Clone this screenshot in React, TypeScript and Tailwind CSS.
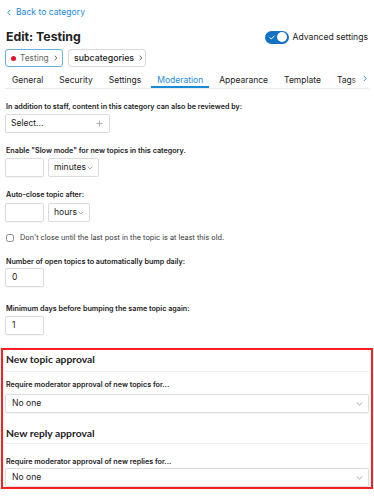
const TABS = ["General", "Security", "Settings", "Moderation", "Appearance", "Template", "Tags"];

function Chevron({ className = "" }: { className?: string }) {
  return (
    <svg viewBox="0 0 10 6" className={className} fill="none" stroke="currentColor" strokeWidth="1.2" strokeLinecap="round" strokeLinejoin="round">
      <path d="M1.5 1.2 5 4.6 8.5 1.2" />
    </svg>
  );
}

function Caret({ className = "" }: { className?: string }) {
  return (
    <svg viewBox="0 0 6 10" className={className} fill="none" stroke="currentColor" strokeWidth="1.4" strokeLinecap="round" strokeLinejoin="round">
      <path d="M1.5 1.5 4.8 5 1.5 8.5" />
    </svg>
  );
}

function Label({ children, className = "" }: { children: React.ReactNode; className?: string }) {
  return <div className={`text-[7.2px] font-semibold leading-[10px] text-[#222] ${className}`}>{children}</div>;
}

function NumberInput({ value = "" }: { value?: string }) {
  return (
    <div className="w-[39px] h-[19px] border border-[#dcdcdc] rounded-[2px] bg-white flex items-center px-[6px] text-[8.5px] text-[#222] shadow-[0_1px_1px_rgba(0,0,0,0.04)]">
      {value}
    </div>
  );
}

function SmallSelect({ text, width }: { text: string; width: string }) {
  return (
    <div className={`${width} h-[19px] border border-[#dcdcdc] rounded-[2px] bg-white flex items-center justify-between pl-[5px] pr-[5px] text-[8.6px] text-[#222]`}>
      <span>{text}</span>
      <Chevron className="w-[6px] h-[4px] text-[#888]" />
    </div>
  );
}

function WideSelect() {
  return (
    <div className="h-[19px] border border-[#dcdcdc] rounded-[2px] bg-white flex items-center justify-between pl-[6px] pr-[5px] text-[8.6px] text-[#222] shadow-[0_1px_1px_rgba(0,0,0,0.04)]">
      <span>No one</span>
      <Chevron className="w-[7px] h-[4px] text-[#888]" />
    </div>
  );
}

export default function App() {
  return (
    <div className="w-[374px] h-[500px] overflow-hidden bg-white px-[5px] font-['Inter',sans-serif] text-[#222]">
      <div className="h-[24px] flex items-center gap-[5px] pl-[2px] text-[8.6px] text-[#1a8ad4]">
        <Caret className="w-[4px] h-[7px] rotate-180" />
        <span>Back to category</span>
      </div>

      <div className="mt-[1px] h-[24px] flex items-center justify-between">
        <h1 className="pl-[1px] text-[12.3px] font-bold leading-none">Edit: Testing</h1>
        <div className="flex items-center gap-[4px] pr-[1px]">
          <div className="w-[24px] h-[13px] rounded-full bg-[#1271c4] flex items-center justify-between pl-[4px] pr-[1.5px]">
            <svg viewBox="0 0 8 6" className="w-[6px] h-[5px]" fill="none" stroke="white" strokeWidth="1.3" strokeLinecap="round" strokeLinejoin="round">
              <path d="M1 3.2 3 5 7 1" />
            </svg>
            <div className="w-[10px] h-[10px] rounded-full bg-white" />
          </div>
          <span className="text-[8.6px]">Advanced settings</span>
        </div>
      </div>

      <div className="h-[18px] flex items-center gap-[5px]">
        <div className="h-[18px] w-[58px] border border-[#6aaede] rounded-[3px] flex items-center pl-[5px] gap-[4px] text-[8.3px] text-[#666]">
          <span className="w-[5px] h-[5px] rounded-full bg-[#e0102f]" />
          <span>Testing</span>
          <Caret className="w-[3.5px] h-[6px] ml-[1px] text-[#444]" />
        </div>
        <div className="h-[18px] w-[78px] border border-[#dadada] rounded-[3px] flex items-center pl-[5px] gap-[5px] text-[8.8px] font-medium text-[#222]">
          <span>subcategories</span>
          <Caret className="w-[3.5px] h-[6px] text-[#444]" />
        </div>
      </div>

      <div className="relative h-[22px] border-b border-[#ececec] overflow-hidden">
        <div className="flex gap-[4px] pl-[1px]">
          {TABS.map((t) => (
            <div
              key={t}
              className={`shrink-0 px-[6px] pt-[7px] h-[21px] leading-[12px] text-[8.5px] border-b-2 ${
                t === "Moderation" ? "border-[#1a8ad4] text-[#1a8ad4]" : "border-transparent text-[#222]"
              }`}
            >
              {t}
            </div>
          ))}
        </div>
        <div className="absolute right-0 top-0 h-[21px] w-[18px] flex items-center justify-end pr-[2px] pt-[2px] bg-gradient-to-r from-transparent via-white to-white">
          <Caret className="w-[4px] h-[7px] text-[#1a8ad4]" />
        </div>
      </div>

      <Label className="mt-[13px] pl-[1px]">In addition to staff, content in this category can also be reviewed by:</Label>
      <div className="mt-[2px] w-[105px] h-[19px] border border-[#dcdcdc] rounded-[2px] bg-white flex items-center justify-between pl-[5px] pr-[6px] text-[8.5px]">
        <span>Select...</span>
        <svg viewBox="0 0 8 8" className="w-[7px] h-[7px]" fill="none" stroke="#999" strokeWidth="0.9">
          <path d="M4 0.5v7M0.5 4h7" />
        </svg>
      </div>

      <Label className="mt-[13px] pl-[1px]">Enable "Slow mode" for new topics in this category.</Label>
      <div className="mt-[2px] flex gap-[4px]">
        <NumberInput />
        <SmallSelect text="minutes" width="w-[51px]" />
      </div>

      <Label className="mt-[13px] pl-[1px]">Auto-close topic after:</Label>
      <div className="mt-[3px] flex gap-[4px]">
        <NumberInput />
        <SmallSelect text="hours" width="w-[42px]" />
      </div>

      <div className="mt-[11px] h-[10px] flex items-center gap-[6px] pl-[1px]">
        <span className="w-[8px] h-[8px] rounded-[2.5px] border border-[#8a8a8a] bg-white" />
        <span className="text-[7.3px] text-[#333]">Don't close until the last post in the topic is at least this old.</span>
      </div>

      <Label className="mt-[14px] pl-[1px]">Number of open topics to automatically bump daily:</Label>
      <div className="mt-[1px]">
        <NumberInput value="0" />
      </div>

      <Label className="mt-[17px] pl-[1px]">Minimum days before bumping the same topic again:</Label>
      <div className="mt-[2px]">
        <NumberInput value="1" />
      </div>

      <div className="mt-[13px] -mx-[4px] border-2 border-[#ff1f1f] px-[2px] h-[141px]">
        <div className="pt-[2px] pb-[5px] leading-[14px] border-b border-[#ededed] pl-[1px] font-['Lato',sans-serif] font-bold text-[10.3px] text-[#222]">
          New topic approval
        </div>
        <Label className="mt-[8px] pl-[1px]">Require moderator approval of new topics for...</Label>
        <div className="mt-[4px]">
          <WideSelect />
        </div>
        <div className="mt-[13px] pb-[3px] leading-[14px] border-b border-[#ededed] pl-[1px] font-['Lato',sans-serif] font-bold text-[10.3px] text-[#222]">
          New reply approval
        </div>
        <Label className="mt-[13px] pl-[1px]">Require moderator approval of new replies for...</Label>
        <div className="mt-[1px]">
          <WideSelect />
        </div>
      </div>
    </div>
  );
}
